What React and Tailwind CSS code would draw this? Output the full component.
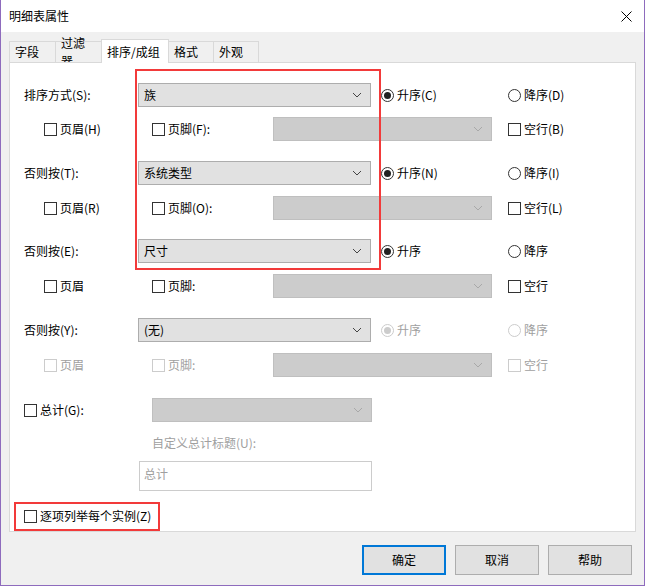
const F = { fontFamily: '"Noto Sans CJK SC", sans-serif' };

function Chev({ dim }) {
  return (
    <svg width="10" height="6" viewBox="0 0 10 6" className="shrink-0">
      <path d="M1 1 L5 5 L9 1" fill="none" stroke={dim ? '#a8a8a8' : '#444'} strokeWidth="1" />
    </svg>
  );
}
function Combo({ text, w, dis, h = 24 }) {
  return (
    <div
      className={`flex items-center justify-between px-[5px] pr-[8px] border ${dis ? 'bg-[#cccccc] border-[#bfbfbf]' : 'bg-[#e1e1e1] border-[#adadad]'}`}
      style={{ width: w, height: h }}
    >
      <span className="text-[12px] text-black">{text}</span>
      <Chev dim={dis} />
    </div>
  );
}
function Cb({ label, dis }) {
  return (
    <div className="flex items-center gap-[3px]">
      <div className={`w-[13px] h-[13px] border bg-white ${dis ? 'border-[#cccccc]' : 'border-[#333]'}`} />
      <span className={`text-[12px] ${dis ? 'text-[#a0a0a0]' : 'text-black'}`}>{label}</span>
    </div>
  );
}
function Radio({ label, on, dis }) {
  return (
    <div className="flex items-center gap-[3px]">
      <div className={`w-[13px] h-[13px] rounded-full border bg-white flex items-center justify-center ${dis ? 'border-[#cccccc]' : 'border-[#333]'}`}>
        {on && <div className={`w-[7px] h-[7px] rounded-full ${dis ? 'bg-[#cccccc]' : 'bg-[#222]'}`} />}
      </div>
      <span className={`text-[12px] ${dis ? 'text-[#a0a0a0]' : 'text-black'}`}>{label}</span>
    </div>
  );
}
function MainRow({ label, combo, r1, r2, mt, dis }) {
  return (
    <div className="flex items-center h-[24px]" style={{ marginTop: mt }}>
      <div className="w-[128px] pl-[14px] text-[12px]">{label}</div>
      <Combo text={combo} w={233} />
      <div className="w-[10px]" />
      <div className="w-[127px]"><Radio label={r1} on dis={dis} /></div>
      <Radio label={r2} dis={dis} />
    </div>
  );
}
function SubRow({ a, b, c, mt, dis }) {
  return (
    <div className="flex items-center h-[24px]" style={{ marginTop: mt }}>
      <div className="w-[142px] pl-[34px]"><Cb label={a} dis={dis} /></div>
      <div className="w-[121px]"><Cb label={b} dis={dis} /></div>
      <Combo w={219} dis />
      <div className="w-[16px]" />
      <Cb label={c} dis={dis} />
    </div>
  );
}

export default function App() {
  return (
    <div style={F} className="w-[645px] h-[586px] bg-[#f0f0f0] border-x border-b border-[#8e6bbd] relative overflow-hidden text-black">
      <div className="h-[32px] bg-white flex items-center justify-between pl-[8px] pr-[12px]">
        <span className="text-[12px]">明细表属性</span>
        <svg width="11" height="11" viewBox="0 0 11 11"><path d="M0.5 0.5 L10.5 10.5 M10.5 0.5 L0.5 10.5" stroke="#000" strokeWidth="1" /></svg>
      </div>
      <div className="flex items-end h-[30px] pl-[9px]">
        {[['字段', 47], ['过滤器', 47], ['排序/成组', 68], ['格式', 46], ['外观', 46]].map(([t, w], i) => (
          <div key={t} style={{ width: w }} className={`border border-[#d9d9d9] px-[5px] text-[12px] flex items-center ${i === 2 ? 'bg-white h-[24px] border-b-0 relative top-[1px] z-10 -ml-px' : 'bg-[#f0f0f0] h-[21px] border-b-0 -ml-px'}`}>{t}</div>
        ))}
      </div>
      <div className="mx-[8px] h-[470px] bg-white border border-[#d9d9d9] relative pt-[20px]">
        <MainRow label="排序方式(S):" combo="族" r1="升序(C)" r2="降序(D)" mt={0} />
        <SubRow a="页眉(H)" b="页脚(F):" c="空行(B)" mt={10} />
        <MainRow label="否则按(T):" combo="系统类型" r1="升序(N)" r2="降序(I)" mt={20} />
        <SubRow a="页眉(R)" b="页脚(O):" c="空行(L)" mt={11} />
        <MainRow label="否则按(E):" combo="尺寸" r1="升序" r2="降序" mt={19} />
        <SubRow a="页眉" b="页脚:" c="空行" mt={11} />
        <MainRow label="否则按(Y):" combo="(无)" r1="升序" r2="降序" mt={20} dis />
        <SubRow a="页眉" b="页脚:" c="空行" mt={11} dis />
        <div className="flex items-center h-[24px] mt-[21px]">
          <div className="w-[142px] pl-[14px]"><Cb label="总计(G):" /></div>
          <Combo w={220} dis />
        </div>
        <div className="mt-[13px] ml-[142px] text-[12px] text-[#a0a0a0] h-[16px] leading-[16px]">自定义总计标题(U):</div>
        <div className="mt-[10px] ml-[129px] w-[233px] h-[30px] border border-[#cccccc] text-[12px] text-[#a0a0a0] px-[4px] pt-[3px]">总计</div>
        <div className="mt-[17px] pl-[14px] h-[16px] flex items-center"><Cb label="逐项列举每个实例(Z)" /></div>
        <div className="absolute left-[125px] top-[6px] w-[246px] h-[201px] border-2 border-[#f23a3a]" />
        <div className="absolute left-[4px] top-[439px] w-[146px] h-[29px] border-2 border-[#f23a3a]" />
      </div>
      <div className="flex justify-end gap-[9px] pr-[12px] mt-[13px]">
        <div className="w-[84px] h-[30px] bg-[#e1e1e1] border-2 border-[#0078d7] flex items-center justify-center text-[12px]">确定</div>
        <div className="w-[84px] h-[30px] bg-[#e1e1e1] border border-[#adadad] flex items-center justify-center text-[12px]">取消</div>
        <div className="w-[84px] h-[30px] bg-[#e1e1e1] border border-[#adadad] flex items-center justify-center text-[12px]">帮助</div>
      </div>
    </div>
  );
}
